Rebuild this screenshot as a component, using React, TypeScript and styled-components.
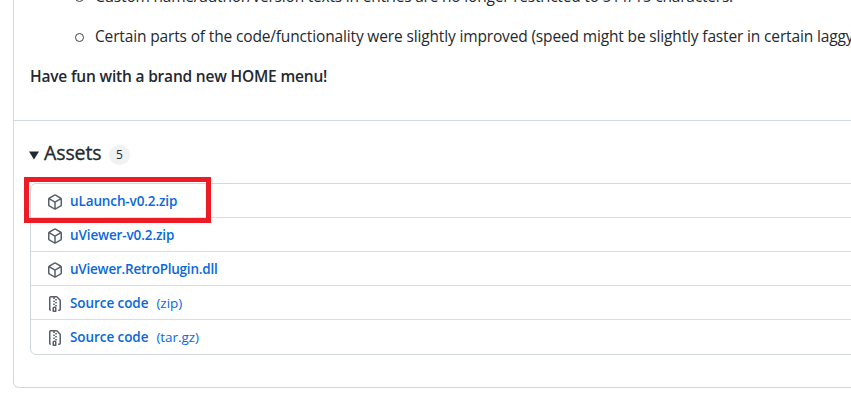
import React from "react";
import styled, { createGlobalStyle } from "styled-components";

const GlobalStyle = createGlobalStyle`
  * { box-sizing: border-box; }
  html, body { margin: 0; background: #fff; overflow: hidden; }
  body { font-family: "Open Sans", "Noto Sans", sans-serif; color: #24292f; }
`;

const Viewport = styled.div`
  width: 851px;
  height: 420px;
  overflow: hidden;
  padding-left: 13px;
`;

const ReleaseCard = styled.article`
  width: 900px;
  height: 388px;
  border: 1px solid #d0d7de;
  border-top: 0;
  border-radius: 0 0 6px 6px;
`;

const Notes = styled.section`
  height: 121px;
  padding-left: 16px;
  border-bottom: 1px solid #d0d7de;
  overflow: hidden;
`;

const NoteList = styled.ul`
  list-style: none;
  margin: -16px 0 0;
  padding: 0 0 0 46px;
`;

const NoteItem = styled.li<{ $spacing: number }>`
  display: flex;
  align-items: center;
  height: 24px;
  font-size: 15.5px;
  white-space: nowrap;
  letter-spacing: ${(p) => p.$spacing}px;

  & + & { margin: 16px 0; }

  &::before {
    content: "";
    flex: none;
    width: 7px;
    height: 7px;
    margin: 2px 11px 0 -1px;
    border: 1.5px solid #3d4248;
    border-radius: 50%;
  }
`;

const Closing = styled.p`
  margin: 0;
  font-size: 15.5px;
  font-weight: 600;
  line-height: 24px;
  letter-spacing: -0.19px;
`;

const Assets = styled.section`
  padding: 17px 0 0 16px;
`;

const AssetsHeader = styled.header`
  display: flex;
  align-items: center;
  height: 30px;
  margin-bottom: 15px;
`;

const Caret = styled.svg`
  width: 10px;
  height: 9px;
  margin: 4px 5px 0 -1px;
  fill: #24292f;
`;

const Title = styled.h3`
  width: 57px;
  margin: 0;
  font-size: 19.5px;
  font-weight: 500;
  line-height: 30px;
  letter-spacing: -0.1px;
  -webkit-text-stroke: 0.35px #24292f;
`;

const Counter = styled.span`
  width: 21px;
  height: 20px;
  margin: 4px 0 0 8px;
  border-radius: 10px;
  background: #eff1f3;
  font-size: 12px;
  font-weight: 500;
  line-height: 20px;
  text-align: center;
`;

const AssetBox = styled.div`
  position: relative;
  width: 860px;
  height: 172px;
  border: 1px solid #d0d7de;
  border-radius: 6px;
`;

const AssetRow = styled.div`
  display: flex;
  align-items: center;
  height: 33px;
  padding-left: 16px;
  color: #0969da;
  font-size: 13.5px;

  & + & {
    height: 34px;
    border-top: 1px solid #d8dee4;
  }
`;

const Icon = styled.svg`
  flex: none;
  width: 16px;
  height: 16px;
  margin: 3px 7px 0 0;
  fill: #57606a;
`;

const AssetName = styled.span<{ $spacing: number }>`
  font-weight: 600;
  letter-spacing: ${(p) => p.$spacing}px;
`;

const Format = styled.span`
  margin-left: 8px;
  letter-spacing: -0.05px;
`;

const Highlight = styled.div`
  position: absolute;
  left: -7px;
  top: -7px;
  width: 187px;
  height: 46px;
  border: 5px solid #ed1c24;
`;

const PACKAGE_PATH =
  "m8.878.392 5.25 3.045c.54.314.872.89.872 1.514v6.098a1.75 1.75 0 0 1-.872 1.514l-5.25 3.045a1.75 1.75 0 0 1-1.756 0l-5.25-3.045A1.75 1.75 0 0 1 1 11.049V4.951c0-.624.332-1.201.872-1.514L7.122.392a1.75 1.75 0 0 1 1.756 0ZM7.875 1.69l-4.63 2.685L8 7.133l4.755-2.758-4.63-2.685a.248.248 0 0 0-.25 0ZM2.5 5.677v5.372c0 .09.047.171.125.216l4.625 2.683V8.432Zm6.25 8.271 4.625-2.683a.25.25 0 0 0 .125-.216V5.677L8.75 8.432Z";
const ZIP_PATH =
  "M3.5 1.75v11.5c0 .09.048.173.126.217a.75.75 0 0 1-.752 1.298A1.748 1.748 0 0 1 2 13.25V1.75C2 .784 2.784 0 3.75 0h5.586c.464 0 .909.185 1.237.513l2.914 2.914c.329.328.513.773.513 1.237v8.586A1.75 1.75 0 0 1 12.25 15h-.5a.75.75 0 0 1 0-1.5h.5a.25.25 0 0 0 .25-.25V4.664a.25.25 0 0 0-.073-.177L9.513 1.573a.25.25 0 0 0-.177-.073H7.25a.75.75 0 0 1 0 1.5h-.5a.75.75 0 0 1 0-1.5h-3a.25.25 0 0 0-.25.25Zm3.75 8.75h.5c.966 0 1.75.784 1.75 1.75v3a.75.75 0 0 1-.75.75h-2.5a.75.75 0 0 1-.75-.75v-3c0-.966.784-1.75 1.75-1.75ZM6 5.25a.75.75 0 0 1 .75-.75h.5a.75.75 0 0 1 0 1.5h-.5A.75.75 0 0 1 6 5.25Zm.75 2.25h.5a.75.75 0 0 1 0 1.5h-.5a.75.75 0 0 1 0-1.5Zm1.25-.75A.75.75 0 0 1 8.75 6h.5a.75.75 0 0 1 0 1.5h-.5A.75.75 0 0 1 8 6.75ZM8.75 3h.5a.75.75 0 0 1 0 1.5h-.5a.75.75 0 0 1 0-1.5ZM8 9.75A.75.75 0 0 1 8.75 9h.5a.75.75 0 0 1 0 1.5h-.5A.75.75 0 0 1 8 9.75Zm-1 2.5v2.25h1v-2.25a.25.25 0 0 0-.25-.25h-.5a.25.25 0 0 0-.25.25Z";

const assets = [
  { name: "uLaunch-v0.2.zip", icon: PACKAGE_PATH, spacing: -0.12 },
  { name: "uViewer-v0.2.zip", icon: PACKAGE_PATH, spacing: -0.12 },
  { name: "uViewer.RetroPlugin.dll", icon: PACKAGE_PATH, spacing: -0.23 },
  { name: "Source code", format: "(zip)", icon: ZIP_PATH, spacing: -0.07 },
  { name: "Source code", format: "(tar.gz)", icon: ZIP_PATH, spacing: -0.07 },
];

export default function App() {
  return (
    <Viewport>
      <GlobalStyle />
      <ReleaseCard>
        <Notes>
          <NoteList>
            <NoteItem $spacing={-0.2}>
              Custom name/author/version texts in entries are no longer restricted to 511/15 characters.
            </NoteItem>
            <NoteItem $spacing={-0.15}>
              Certain parts of the code/functionality were slightly improved (speed might be slightly faster in certain laggy
            </NoteItem>
          </NoteList>
          <Closing>Have fun with a brand new HOME menu!</Closing>
        </Notes>
        <Assets>
          <AssetsHeader>
            <Caret viewBox="0 0 10 9"><path d="M0 .5h10L5 8.5Z" /></Caret>
            <Title>Assets</Title>
            <Counter>5</Counter>
          </AssetsHeader>
          <AssetBox>
            {assets.map((a, i) => (
              <AssetRow key={i}>
                <Icon viewBox="0 0 16 16"><path d={a.icon} /></Icon>
                <AssetName $spacing={a.spacing}>{a.name}</AssetName>
                {a.format && <Format>{a.format}</Format>}
              </AssetRow>
            ))}
            <Highlight />
          </AssetBox>
        </Assets>
      </ReleaseCard>
    </Viewport>
  );
}
